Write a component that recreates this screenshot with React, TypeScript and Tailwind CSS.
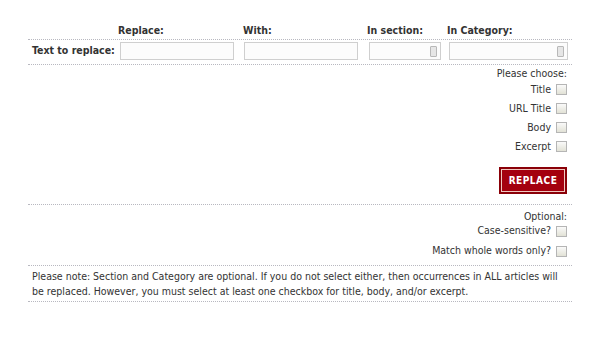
import React from "react";

const Check = () => (
  <span className="ml-[5px] inline-block h-[11px] w-[11px] border border-[#b5b5b5] bg-gradient-to-b from-[#fafafa] to-[#e2e2d6] align-middle" />
);

const Select = ({ width }: { width: string }) => (
  <div className={`${width} relative h-[18px] border border-[#cfcfcf] bg-[#fcfcfc]`}>
    <span className="absolute right-[3px] top-[3px] h-[11px] w-[7px] rounded-[1px] border border-[#b8b8b8] bg-[#e6e6e6]" />
  </div>
);

const App = () => {
  const choices = ["Title", "URL Title", "Body", "Excerpt"];

  return (
    <div className="h-[363px] w-[600px] bg-white font-['DejaVu_Sans_Condensed','DejaVu_Sans',sans-serif] text-[10.5px] text-[#333]">
      <div className="ml-[28px] w-[544px] pt-[22px]">
        <div className="flex h-[18px] items-center border-b border-dotted border-[#b8b8c0] font-bold">
          <div className="w-[90px]" />
          <div className="w-[125px]">Replace:</div>
          <div className="w-[124px]">With:</div>
          <div className="w-[80px]">In section:</div>
          <div>In Category:</div>
        </div>
        <div className="flex h-[25px] items-start border-b border-dotted border-[#b8b8c0] pt-[2px]">
          <div className="flex h-[18px] w-[92px] items-center whitespace-nowrap pl-[4px] font-bold">Text to replace:</div>
          <input className="h-[18px] w-[114px] border border-[#cfcfcf] bg-[#fcfcfc]" />
          <div className="w-[10px]" />
          <input className="h-[18px] w-[114px] border border-[#cfcfcf] bg-[#fcfcfc]" />
          <div className="w-[11px]" />
          <Select width="w-[72px]" />
          <div className="w-[8px]" />
          <Select width="w-[119px]" />
        </div>
        <div className="flex flex-col items-end border-b border-dotted border-[#b8b8c0] pb-[10px] pr-[5px] pt-[2px]">
          <div className="h-[13px] leading-[13px]">Please choose:</div>
          {choices.map((c) => (
            <div key={c} className="flex h-[19px] items-center">
              {c}
              <Check />
            </div>
          ))}
          <button className="mt-[11px] h-[27px] w-[68px] border-2 border-[#8a0008] bg-[#a4000e] text-[10px] font-bold tracking-[0.5px] text-white shadow-[inset_0_0_0_1px_#f0c8c0]">
            REPLACE
          </button>
        </div>
        <div className="flex flex-col items-end border-b border-dotted border-[#b8b8c0] pb-[4px] pr-[5px] pt-[4px]">
          <div className="h-[14px] leading-[14px]">Optional:</div>
          <div className="flex h-[16px] items-center">
            Case-sensitive?
            <Check />
          </div>
          <div className="mt-[2px] flex h-[20px] items-center">
            Match whole words only?
            <Check />
          </div>
        </div>
        <div className="border-b border-dotted border-[#b8b8c0] pb-[2px] pl-[4px] pr-[8px] pt-[3px] leading-[15px]">
          Please note: Section and Category are optional. If you do not select either, then occurrences in ALL articles will be
          replaced. However, you must select at least one checkbox for title, body, and/or excerpt.
        </div>
      </div>
    </div>
  );
};

export default App;
